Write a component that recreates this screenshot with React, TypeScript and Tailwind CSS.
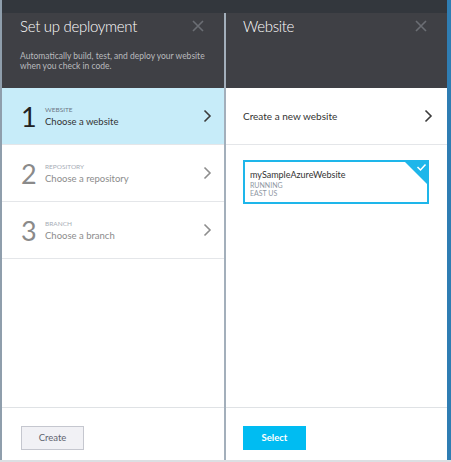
import React from 'react';

const Chevron: React.FC<{ color?: string }> = ({ color = '#3b3b3b' }) => (
  <svg width="9" height="14" viewBox="0 0 9 14" fill="none">
    <path d="M1.5 1.5L7 7L1.5 12.5" stroke={color} strokeWidth="1.6" />
  </svg>
);

const CloseX: React.FC = () => (
  <svg width="12" height="12" viewBox="0 0 12 12" fill="none">
    <path d="M1 1L11 11M11 1L1 11" stroke="#6b6e74" strokeWidth="1.6" />
  </svg>
);

const StepRow: React.FC<{
  num: string;
  label: string;
  text: string;
  active?: boolean;
}> = ({ num, label, text, active }) => (
  <div
    className={`h-[57px] flex items-center pl-[19px] pr-[12px] border-b border-[#e4e6e9] ${
      active ? 'bg-[#c7ecf9]' : 'bg-white'
    }`}
  >
    <div
      className={`w-[24px] text-[27px] leading-none ${
        active ? 'text-[#222]' : 'text-[#8a8a8a]'
      }`}
    >
      {num}
    </div>
    <div className="flex-1 pt-[1px]">
      <div className={`text-[6.5px] leading-[10px] ${active ? 'text-[#6e7885]' : 'text-[#a7adb6]'}`}>{label}</div>
      <div className={`text-[9.5px] leading-[13px] ${active ? 'text-[#333]' : 'text-[#8c8c8c]'}`}>{text}</div>
    </div>
    <Chevron color={active ? '#3b3b3b' : '#8d8d8d'} />
  </div>
);

export default function App() {
  return (
    <div
      className="w-[451px] h-[462px] flex flex-col bg-white overflow-hidden"
      style={{ fontFamily: 'Lato, "Noto Sans", sans-serif' }}
    >
      <div className="flex flex-1 min-h-0">
        <div className="w-[2px] bg-[#8f9eac]" />
        <div className="flex-1 flex flex-col">
          <div className="h-[13px] bg-[#33373d]" />
          <div className="flex flex-1 min-h-0">
            {/* Left blade */}
            <div className="w-[222px] flex flex-col">
              <div className="h-[75px] bg-[#3f4045] pl-[18px] pr-[18px] pt-[1px]">
                <div className="flex items-center justify-between h-[24px]">
                  <span className="text-[15px] tracking-[-0.3px] font-light text-white">Set up deployment</span>
                  <span className="mr-[2px]"><CloseX /></span>
                </div>
                <p className="mt-[13px] -mr-[10px] text-[8.5px] leading-[10px] text-[#b9babd]">
                  Automatically build, test, and deploy your website when you check in code.
                </p>
              </div>
              <StepRow num="1" label="WEBSITE" text="Choose a website" active />
              <StepRow num="2" label="REPOSITORY" text="Choose a repository" />
              <StepRow num="3" label="BRANCH" text="Choose a branch" />
              <div className="flex-1" />
              <div className="h-[53px] border-t border-[#dfe2e5] pl-[19px] pt-[15px]">
                <button className="w-[63px] h-[24px] bg-[#f1f1f5] border border-[#c5c7cf] text-[9.5px] text-[#5f6470]">
                  Create
                </button>
              </div>
            </div>
            <div className="w-[2px] bg-[#a3afbb]" />
            {/* Right blade */}
            <div className="flex-1 flex flex-col">
              <div className="h-[75px] bg-[#3f4045] pl-[17px] pr-[18px] pt-[1px]">
                <div className="flex items-center justify-between h-[24px]">
                  <span className="text-[15px] tracking-[-0.3px] font-light text-white">Website</span>
                  <span className="mr-[2px]"><CloseX /></span>
                </div>
              </div>
              <div className="h-[57px] flex items-center justify-between pl-[17px] pr-[14px] border-b border-[#e4e6e9]">
                <span className="text-[10px] text-[#333]">Create a new website</span>
                <Chevron />
              </div>
              <div className="pl-[17px] pr-[18px] pt-[15px]">
                <div className="relative h-[44px] border-2 border-[#1eb6ea] pl-[5px] pt-[7px]">
                  <div className="text-[9px] leading-[12px] text-[#333]">mySampleAzureWebsite</div>
                  <div className="text-[7px] leading-[8px] text-[#8f97a3]">RUNNING</div>
                  <div className="text-[7px] leading-[8px] text-[#8f97a3]">EAST US</div>
                  <svg className="absolute -top-[2px] -right-[2px]" width="26" height="26" viewBox="0 0 26 26">
                    <path d="M0 0H26V26Z" fill="#1eb6ea" />
                    <path d="M14.5 7L17.5 10L22.5 4.5" stroke="white" strokeWidth="1.5" fill="none" />
                  </svg>
                </div>
              </div>
              <div className="flex-1" />
              <div className="h-[53px] border-t border-[#dfe2e5] pl-[17px] pt-[15px]">
                <button className="w-[63px] h-[24px] bg-[#00bcf2] text-[9.5px] font-bold text-white">
                  Select
                </button>
              </div>
            </div>
          </div>
        </div>
        <div className="w-[4px] bg-[#2f7db3]" />
      </div>
      <div className="h-[2px] bg-[#dcdfe3]" />
    </div>
  );
}
